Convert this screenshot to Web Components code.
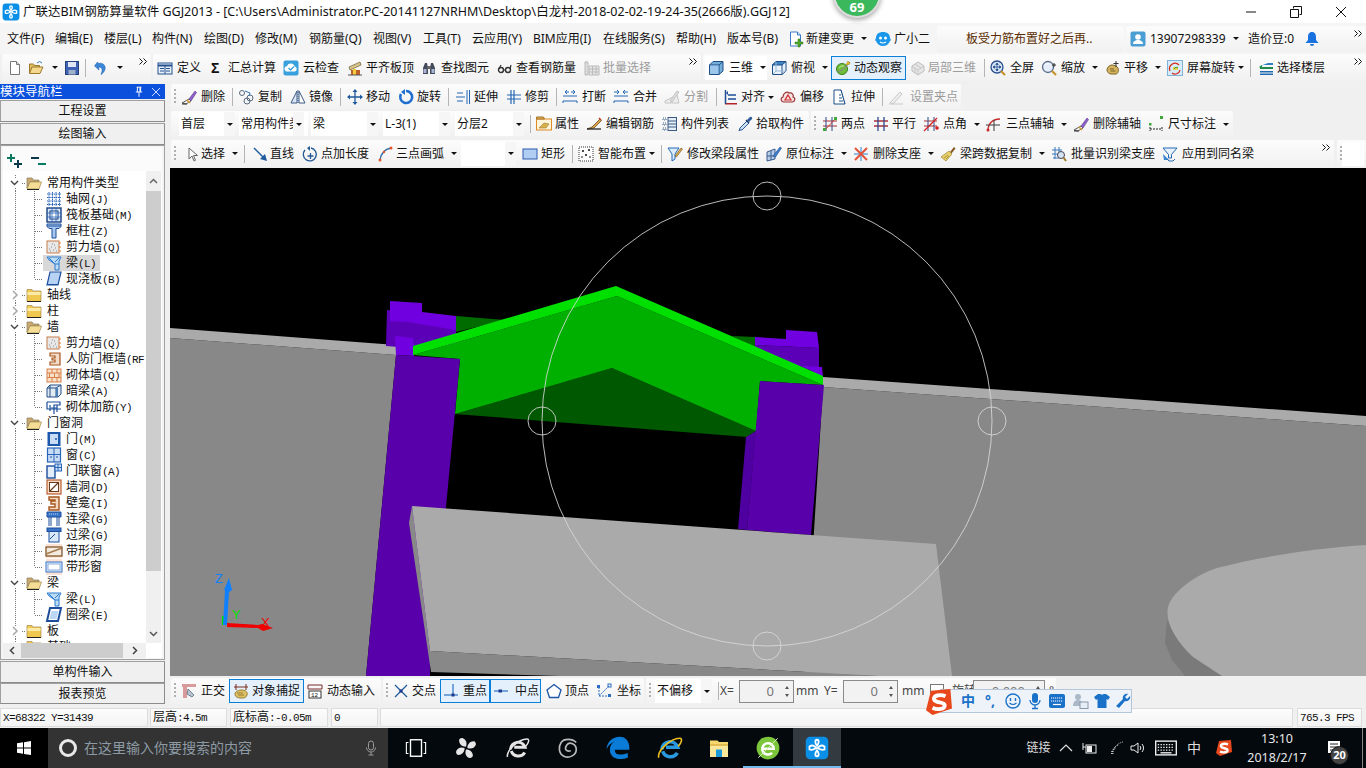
<!DOCTYPE html>
<html lang="zh">
<head>
<meta charset="utf-8">
<title>GGJ2013</title>
<style>
  html, body { margin: 0; padding: 0; background: #f0f0f0; }
</style>
</head>
<body>
<app-window>
  <title-bar></title-bar>

  <menu-bar>
    <menu-item w="48">文件(F)</menu-item><menu-item w="49">编辑(E)</menu-item><menu-item w="48">楼层(L)</menu-item>
    <menu-item w="52">构件(N)</menu-item><menu-item w="51">绘图(D)</menu-item><menu-item w="54">修改(M)</menu-item>
    <menu-item w="64">钢筋量(Q)</menu-item><menu-item w="50">视图(V)</menu-item><menu-item w="49">工具(T)</menu-item>
    <menu-item w="61">云应用(Y)</menu-item><menu-item w="70">BIM应用(I)</menu-item><menu-item w="73">在线服务(S)</menu-item>
    <menu-item w="51">帮助(H)</menu-item><menu-item w="61">版本号(B)</menu-item>
    <tool-btn i="newchg" t="18" w="87" caret>新建变更</tool-btn>
    <tool-btn i="xiaoer" t="19" w="62">广小二</tool-btn>
    <tool-seg w="187" p="29" h="26"><span style="color:#5a2c00">板受力筋布置好之后再..</span></tool-seg>
    <tool-gap w="2"></tool-gap>
    <tool-seg w="240" p="4" h="26">
      <tool-btn i="avatar" t="20" w="118" caret>13907298339</tool-btn>
      <tool-btn w="56" t="0">造价豆:0</tool-btn>
      <ui-icon name="bell"></ui-icon>
      <tool-more></tool-more>
    </tool-seg>
  </menu-bar>

  <tool-row h="30">
    <tool-gap w="2"></tool-gap>
    <tool-seg w="149" p="5" h="27">
      <tool-btn i="doc" t="21" w="21"></tool-btn>
      <tool-btn i="open" t="17" w="36" caret></tool-btn>
      <tool-btn i="save" t="21" w="21"></tool-btn>
      <tool-sep w="8"></tool-sep>
      <tool-btn i="undo" t="17" w="34" caret></tool-btn>
      <tool-more></tool-more>
    </tool-seg>
    <tool-gap w="2"></tool-gap>
    <tool-seg w="548" p="4" h="27">
      <tool-btn i="define" t="20" w="54">定义</tool-btn>
      <tool-btn i="sigma" t="17" w="72">汇总计算</tool-btn>
      <tool-btn i="cloudchk" t="20" w="64">云检查</tool-btn>
      <tool-btn i="flatten" t="19" w="74">平齐板顶</tool-btn>
      <tool-btn i="binoc" t="20" w="76">查找图元</tool-btn>
      <tool-btn i="glasses" t="19" w="87">查看钢筋量</tool-btn>
      <tool-btn i="batch" t="19" w="100" off>批量选择</tool-btn>
      <tool-more></tool-more>
    </tool-seg>
    <tool-gap w="2"></tool-gap>
    <tool-seg w="663" p="2" h="27">
      <tool-btn i="cube" t="21" w="62" p="3" box caret>三维</tool-btn>
      <tool-gap w="4"></tool-gap>
      <tool-btn i="cubetop" t="20" w="60" caret>俯视</tool-btn>
      <tool-btn i="orbit" t="19" w="75" p="4" on>动态观察</tool-btn>
      <tool-gap w="4"></tool-gap>
      <tool-btn i="local3d" t="18" w="74" off>局部三维</tool-btn>
      <tool-sep w="6"></tool-sep>
      <tool-btn i="zoomall" t="20" w="51">全屏</tool-btn>
      <tool-btn i="zoom" t="20" w="64" caret>缩放</tool-btn>
      <tool-btn i="pan" t="19" w="62" caret>平移</tool-btn>
      <tool-btn i="rotscr" t="20" w="83" caret tight>屏幕旋转</tool-btn>
      <tool-sep w="8"></tool-sep>
      <tool-btn i="floors" t="19" w="92">选择楼层</tool-btn>
      <tool-more></tool-more>
    </tool-seg>
  </tool-row>

  <main-area>
    <nav-panel>
      <tree-row k="open" ic="folderopen" t="常用构件类型"></tree-row>
      <tree-row k="leaf" ic="grid" t="轴网(J)"></tree-row>
      <tree-row k="leaf" ic="raft" t="筏板基础(M)"></tree-row>
      <tree-row k="leaf" ic="column" t="框柱(Z)"></tree-row>
      <tree-row k="leaf" ic="shear" t="剪力墙(Q)"></tree-row>
      <tree-row k="leaf" ic="beam" t="梁(L)" sel></tree-row>
      <tree-row k="leaf" ic="slab" t="现浇板(B)" last></tree-row>
      <tree-row k="shut" ic="folder" t="轴线"></tree-row>
      <tree-row k="shut" ic="folder" t="柱"></tree-row>
      <tree-row k="open" ic="folderopen" t="墙"></tree-row>
      <tree-row k="leaf" ic="shear" t="剪力墙(Q)"></tree-row>
      <tree-row k="leaf" ic="rfwall" t="人防门框墙(RF"></tree-row>
      <tree-row k="leaf" ic="brick" t="砌体墙(Q)"></tree-row>
      <tree-row k="leaf" ic="hidbeam" t="暗梁(A)"></tree-row>
      <tree-row k="leaf" ic="rebar" t="砌体加筋(Y)" last></tree-row>
      <tree-row k="open" ic="folderopen" t="门窗洞"></tree-row>
      <tree-row k="leaf" ic="door" t="门(M)"></tree-row>
      <tree-row k="leaf" ic="window" t="窗(C)"></tree-row>
      <tree-row k="leaf" ic="doorwin" t="门联窗(A)"></tree-row>
      <tree-row k="leaf" ic="hole" t="墙洞(D)"></tree-row>
      <tree-row k="leaf" ic="niche" t="壁龛(I)"></tree-row>
      <tree-row k="leaf" ic="linkbeam" t="连梁(G)"></tree-row>
      <tree-row k="leaf" ic="lintel" t="过梁(G)"></tree-row>
      <tree-row k="leaf" ic="bandhole" t="带形洞"></tree-row>
      <tree-row k="leaf" ic="bandwin" t="带形窗" last></tree-row>
      <tree-row k="open" ic="folderopen" t="梁"></tree-row>
      <tree-row k="leaf" ic="beam" t="梁(L)"></tree-row>
      <tree-row k="leaf" ic="ringbeam" t="圈梁(E)" last></tree-row>
      <tree-row k="shut" ic="folder" t="板"></tree-row>
      <tree-row k="shut" ic="folder" t="基础"></tree-row>
    </nav-panel>

    <work-area>
      <tool-row h="27">
        <tool-seg w="790" p="0" h="26">
          <tool-grip w="10"></tool-grip>
          <tool-btn i="eraser" t="20" w="51">删除</tool-btn>
          <tool-sep w="6"></tool-sep>
          <tool-btn i="copy" t="20" w="52">复制</tool-btn>
          <tool-btn i="mirror" t="19" w="50">镜像</tool-btn>
          <tool-sep w="7"></tool-sep>
          <tool-btn i="move" t="19" w="51">移动</tool-btn>
          <tool-btn i="rotate" t="19" w="50">旋转</tool-btn>
          <tool-sep w="7"></tool-sep>
          <tool-btn i="extend" t="19" w="51">延伸</tool-btn>
          <tool-btn i="trim" t="19" w="50">修剪</tool-btn>
          <tool-sep w="6"></tool-sep>
          <tool-btn i="break" t="20" w="51">打断</tool-btn>
          <tool-btn i="merge" t="20" w="51">合并</tool-btn>
          <tool-btn i="split" t="20" w="52" off>分割</tool-btn>
          <tool-sep w="7"></tool-sep>
          <tool-btn i="align" t="18" w="57" caret tight>对齐</tool-btn>
          <tool-btn i="offset" t="20" w="52">偏移</tool-btn>
          <tool-btn i="stretch" t="19" w="50">拉伸</tool-btn>
          <tool-sep w="6"></tool-sep>
          <tool-btn i="setgrip" t="22" w="73" off>设置夹点</tool-btn>
        </tool-seg>
      </tool-row>
      <tool-row h="29">
        <tool-seg w="638" p="8" h="26">
          <tool-combo w="56">首层</tool-combo><tool-gap w="4"></tool-gap>
          <tool-combo w="69" clip="52">常用构件类型</tool-combo><tool-gap w="3"></tool-gap>
          <tool-combo w="67">梁</tool-combo><tool-gap w="5"></tool-gap>
          <tool-combo w="67">L-3(1)</tool-combo><tool-gap w="5"></tool-gap>
          <tool-combo w="69">分层2</tool-combo><tool-gap w="6"></tool-gap>
          <tool-sep w="6"></tool-sep>
          <tool-btn i="props" t="19" w="50">属性</tool-btn>
          <tool-btn i="editbar" t="20" w="76">编辑钢筋</tool-btn>
          <tool-btn i="list" t="19" w="76">构件列表</tool-btn>
          <tool-btn i="dropper" t="18" w="71">拾取构件</tool-btn>
        </tool-seg>
        <tool-gap w="2"></tool-gap>
        <tool-seg w="422" p="0" h="26">
          <tool-grip w="11"></tool-grip>
          <tool-btn i="twopt" t="19" w="51">两点</tool-btn>
          <tool-btn i="parallel" t="19" w="50">平行</tool-btn>
          <tool-btn i="angle" t="20" w="62" caret>点角</tool-btn>
          <tool-btn i="arcaxis" t="21" w="88" caret>三点辅轴</tool-btn>
          <tool-btn i="eraser" t="20" w="75">删除辅轴</tool-btn>
          <tool-btn i="dim" t="20" w="85" caret>尺寸标注</tool-btn>
        </tool-seg>
      </tool-row>
      <tool-row h="28">
        <tool-seg w="1163" p="0" h="27">
          <tool-grip w="13"></tool-grip>
          <tool-btn i="cursor" t="17" w="60" caret>选择</tool-btn>
          <tool-sep w="8"></tool-sep>
          <tool-btn i="line" t="18" w="50">直线</tool-btn>
          <tool-btn i="ptlen" t="19" w="76">点加长度</tool-btn>
          <tool-btn i="arc" t="18" w="83" caret>三点画弧</tool-btn>
          <tool-combo w="55"></tool-combo><tool-gap w="6"></tool-gap>
          <tool-btn i="rect" t="19" w="50">矩形</tool-btn>
          <tool-sep w="6"></tool-sep>
          <tool-btn i="smart" t="20" w="83" caret tight>智能布置</tool-btn>
          <tool-sep w="6"></tool-sep>
          <tool-btn i="funnelpen" t="20" w="99">修改梁段属性</tool-btn>
          <tool-btn i="markup" t="20" w="87" caret>原位标注</tool-btn>
          <tool-btn i="delsup" t="20" w="87" caret>删除支座</tool-btn>
          <tool-btn i="broom" t="20" w="111" caret>梁跨数据复制</tool-btn>
          <tool-btn i="recog" t="20" w="111">批量识别梁支座</tool-btn>
          <tool-btn i="funnel" t="20" w="96">应用到同名梁</tool-btn>
          <tool-more></tool-more>
        </tool-seg>
        <tool-gap w="3"></tool-gap>
        <tool-seg w="29" p="0" h="27">
          <tool-grip w="5"></tool-grip>
          <tool-combo w="22" plain></tool-combo>
        </tool-seg>
      </tool-row>
      <scene-view></scene-view>
      <tool-row h="30" mid>
        <tool-gap w="1"></tool-gap>
        <tool-seg w="210" p="0" h="26">
          <tool-grip w="10"></tool-grip>
          <tool-btn i="ortho" t="20" w="48">正交</tool-btn>
          <tool-btn i="snap" t="19" w="75" p="4" on>对象捕捉</tool-btn>
          <tool-gap w="3"></tool-gap>
          <tool-btn i="dyn" t="20" w="74">动态输入</tool-btn>
        </tool-seg>
        <tool-gap w="2"></tool-gap>
        <tool-seg w="261" p="0" h="26">
          <tool-grip w="10"></tool-grip>
          <tool-btn i="xpt" t="19" w="47">交点</tool-btn>
          <tool-btn i="perp" t="20" w="50" p="3" on>重点</tool-btn>
          <tool-btn i="midpt" t="22" w="51" p="3" on>中点</tool-btn>
          <tool-gap w="5"></tool-gap>
          <tool-btn i="vertex" t="19" w="50">顶点</tool-btn>
          <tool-btn i="coord" t="21" w="48">坐标</tool-btn>
        </tool-seg>
        <tool-gap w="2"></tool-gap>
        <tool-seg w="410" p="0" h="26">
          <tool-grip w="9"></tool-grip>
          <tool-combo w="57">不偏移</tool-combo><tool-gap w="6"></tool-gap>
          <tool-sep w="2"></tool-sep>
          <tool-btn w="19" t="0" dim>X=</tool-btn>
          <num-input w="55" v="0"></num-input>
          <tool-gap w="2"></tool-gap>
          <tool-btn w="28" t="0" dim>mm</tool-btn>
          <tool-btn w="19" t="0" dim>Y=</tool-btn>
          <num-input w="55" v="0"></num-input>
          <tool-gap w="4"></tool-gap>
          <tool-btn w="28" t="0" dim>mm</tool-btn>
          <tool-btn w="22" t="0"><span style="display:block;width:12px;height:12px;border:1px solid #777;background:#fff"></span></tool-btn>
          <tool-btn w="21" t="0" dim>旋转</tool-btn>
          <num-input w="72" v="0.000"></num-input>
          <tool-gap w="4"></tool-gap>
          <tool-btn w="8" t="0" dim>°</tool-btn>
        </tool-seg>
      </tool-row>
    </work-area>
  </main-area>

  <status-bar>
    <stat-cell w="148" t="X=68322 Y=31439"></stat-cell><tool-gap w="2"></tool-gap>
    <stat-cell w="77" t="层高:4.5m"></stat-cell><tool-gap w="3"></tool-gap>
    <stat-cell w="98" t="底标高:-0.05m"></stat-cell><tool-gap w="3"></tool-gap>
    <stat-cell w="47" t="0"></stat-cell><tool-gap w="2"></tool-gap>
    <stat-cell w="913" t=""></stat-cell><tool-gap w="4"></tool-gap>
    <stat-cell w="65" t="765.3 FPS"></stat-cell>
  </status-bar>

  <task-bar>
    <task-item w="48" ic="win"></task-item>
    <task-search>在这里输入你要搜索的内容</task-search>
    <task-gap w="3"></task-gap>
    <task-item w="50" ic="taskview" s="22"></task-item>
    <task-item w="50" ic="fan" s="22"></task-item>
    <task-item w="54" ic="ieo" s="24"></task-item>
    <task-item w="46" ic="spiral" s="22"></task-item>
    <task-item w="54" ic="edge" s="26"></task-item>
    <task-item w="50" ic="iecolor" s="26"></task-item>
    <task-item w="48" ic="folderbar" s="24"></task-item>
    <task-item w="50" ic="greene" s="26" run></task-item>
    <task-item w="48" ic="app" s="24" run cur></task-item>
    <task-tray></task-tray>
  </task-bar>

  <score-bubble>69</score-bubble>
  <ime-bar></ime-bar>
</app-window>

<script>
const ICONS = {
  doc: `<path d="M3.5 1.5h6l3 3v10h-9z" fill="#fff" stroke="#777"/><path d="M9.5 1.5v3h3" fill="#ddd" stroke="#777"/>`,
  open: `<path d="M1.5 13V4h4l1 1.5h5V7" fill="#e2bd62" stroke="#9a7a2a"/><path d="M1.5 13.5 4 7h11l-3 6.5z" fill="#f4d88e" stroke="#9a7a2a"/><path d="M9 3q3-3 5 0" fill="none" stroke="#3a7ac8"/>`,
  save: `<rect x="1.5" y="1.5" width="13" height="13" fill="#3f63b4" stroke="#23407e"/><rect x="4" y="2" width="8" height="5" fill="#dfe7f5"/><rect x="4.5" y="10" width="7" height="4.5" fill="#9fb0c8"/>`,
  undo: `<path d="M5 3.5C11 2 14 7 11 11.5 10 13 9 14 8 14.5 10 10 9.5 7 5.5 7L6 10 1.5 6l3-4z" fill="#3a86d8" stroke="#2465ae" stroke-width=".6"/>`,
  define: `<rect x="1" y="3" width="14" height="11" fill="#e8f0fa" stroke="#23508e"/><path d="M1 5.5h14" stroke="#23508e" stroke-width="2"/><path d="M3 8.5h4M3 11h4M9 8.5h4M9 11h4M8 6v8" stroke="#23508e"/>`,
  sigma: `<text x="0" y="13" font-family="Liberation Sans,sans-serif" font-size="14" font-weight="bold" fill="#111">Σ</text>`,
  cloudchk: `<rect x=".5" y=".5" width="15" height="15" rx="2" fill="#38a0dc"/><path d="M3 11.5a3 3 0 0 1 1-5.6 4 4 0 0 1 7.6.6 2.6 2.6 0 0 1 .4 5z" fill="#fff"/><path d="M5.5 8l2 2 3.5-3.5" fill="none" stroke="#38a0dc" stroke-width="1.3"/>`,
  flatten: `<path d="M2 7 13 2l1 3L3 10z" fill="#d8c58c" stroke="#6a5a30" stroke-width=".7"/><rect x="4" y="10" width="9" height="5" fill="#c0602a"/><rect x="6" y="9" width="3" height="6" fill="#f2cf3c"/><path d="M1 15h14" stroke="#555"/>`,
  binoc: `<path d="M2 14V8l2-5h2l1 5v6zM9 14V8l1-5h2l2 5v6z" fill="#444a5c"/><rect x="2.5" y="9" width="3" height="4" fill="#a8b6d4"/><rect x="10.5" y="9" width="3" height="4" fill="#a8b6d4"/><rect x="6" y="6" width="4" height="3" fill="#666"/>`,
  glasses: `<circle cx="4" cy="10" r="2.5" fill="none" stroke="#333" stroke-width="1.4"/><circle cx="11" cy="10" r="2.5" fill="none" stroke="#333" stroke-width="1.4"/><path d="M6.5 10h2M2 9l2-4M13 9l1-4" stroke="#333" stroke-width="1.2"/>`,
  batch: `<path d="M1 2h3v13H1zM5 6h10v9H5z" fill="#e6e6e6" stroke="#bbb"/><path d="M5 9h10M5 12h10M8.5 6v9M12 6v9" stroke="#bbb"/><path d="M2 1v14" stroke="#bbb" stroke-dasharray="1 1"/>`,
  cube: `<path d="M1.5 5 5 1.5h10V11l-4 3.5H1.5z" fill="#76aedb" stroke="#1d4f86"/><path d="M1.5 5H11v9.5M11 5l4-3.5" fill="none" stroke="#1d4f86"/><path d="M2 5.5h8.500v8.500H2z" fill="#9cc7ea"/>`,
  cubetop: `<path d="M1.500 5 5 1.500h10V11l-4 3.500H1.500z" fill="#eaf3fb" stroke="#1d4f86"/><path d="M5 1.500h10L11 5H1.500z" fill="#3f83c4" stroke="#1d4f86"/><path d="M11 5v9.500" stroke="#1d4f86"/><path d="M1.500 14.500 5 11h10M5 2v9" stroke="#9cbad8" fill="none"/>`,
  orbit: `<circle cx="7" cy="9" r="5.500" fill="#6fbf3c" stroke="#3b7d1c"/><path d="M3 12C6 11 11 7 15 2" stroke="#888" stroke-width="1.200" fill="none"/><path d="M11 5l2-4 2 3z" fill="#f1c21e" stroke="#a07f10" stroke-width=".5"/><path d="M4 8q2-3 5-2" stroke="#c5eb9a" fill="none"/>`,
  local3d: `<path d="M2 6l6-4 6 4v5l-6 4-6-4z" fill="#e6e6e6" stroke="#bdbdbd"/><path d="M2 6l6 4 6-4M8 10v5M5 4l6 4M5 13V8" stroke="#c6c6c6" fill="none"/>`,
  zoomall: `<circle cx="7" cy="7" r="6" fill="#d6e6f8" stroke="#29508c" stroke-width="1.300"/><path d="M7 3v8M3 7h8M7 3 5.800 4.500h2.400zM7 11l-1.200-1.500h2.400zM3 7l1.500-1.200v2.400zM11 7 9.500 5.800v2.400z" stroke="#29508c" fill="#29508c" stroke-width=".8"/><path d="M11 11l4 4" stroke="#c8922a" stroke-width="2.200"/>`,
  zoom: `<circle cx="7" cy="7" r="5.500" fill="#e5eefa" stroke="#5a6c88" stroke-width="1.300"/><path d="M4 5q2-2 4-1" stroke="#fff" fill="none"/><path d="M11 11l4 4" stroke="#c8922a" stroke-width="2.200"/><path d="M13 3v4M11 5h4" stroke="#333"/>`,
  pan: `<path d="M2 10c0-3 3-5 5-5s5 1 6 3 0 6-2 6H6c-2 0-4-2-4-4z" fill="#d2b25e" stroke="#7e6426"/><path d="M5 9l4 0M5.500 11l5 0" stroke="#7e6426"/><path d="M11 1v6M8.500 3.500h5" stroke="#333"/>`,
  rotscr: `<rect x=".5" y=".5" width="15" height="15" fill="#d6ecf8" stroke="#7fb2d6"/><path d="M3 11a5.500 5.500 0 0 1 9-6" fill="none" stroke="#d62c1c" stroke-width="1.300"/><path d="M13 10a5 5 0 0 1-8 3" fill="none" stroke="#d62c1c" stroke-width="1.300"/><path d="M6 7h5v3H6z" fill="#e8d24a"/><path d="M7 9l2-2 2 1" stroke="#3a9a3a" fill="none"/>`,
  floors: `<path d="M2 6 10 3h5v2H6z" fill="#2f7fc0"/><path d="M2 7h13v2H2z" fill="#1f8a4a"/><path d="M2 11h13v1.500H2zM2 13.500h13V15H2z" fill="#1f6ab0"/><path d="M4 5 1 7l3 2" fill="#1f8a4a"/>`,
  newchg: `<path d="M2.500 1h7l3 3v11h-10z" fill="#fff" stroke="#3a7ac8"/><path d="M9.500 1v3h3" fill="#cfe1f5" stroke="#3a7ac8"/><path d="M10 8v3H7v2h3v3h2v-3h3v-2h-3V8z" fill="#52a82a" stroke="#2f7a12" stroke-width=".5"/>`,
  xiaoer: `<path d="M1 7c0-4 3-6 7-6s7 2 7 6c1 1 1 3 0 3-1 3-4 5-7 5s-6-2-7-5c-1 0-1-2 0-3z" fill="#1a96ea"/><circle cx="5.500" cy="7" r="1.500" fill="#fff"/><circle cx="10.500" cy="7" r="1.500" fill="#fff"/><path d="M5 11q3 2 6 0" stroke="#fff" fill="none" stroke-width="1.200"/>`,
  avatar: `<rect x=".5" y=".5" width="15" height="15" rx="2" fill="#4b9ed4"/><circle cx="8" cy="6" r="2.800" fill="#fff"/><path d="M3 13c0-3 3-4 5-4s5 1 5 4z" fill="#fff"/>`,
  bell: `<path d="M8 1c3 0 4 2.500 4 5v3l2.500 3h-13L4 9V6c0-2.500 1-5 4-5z" fill="#1a72e0"/><path d="M6 13h4a2 2 0 0 1-4 0z" fill="#1a72e0"/>`,
  eraser: `<path d="M1 14 8 10l2 2-5 3z" fill="#f2f2f2" stroke="#333" stroke-width=".8"/><path d="M8 10l6-8 1.500 1.500-5.500 8.500z" fill="#8d5fc8" stroke="#5a3a8c" stroke-width=".6"/><path d="M6 11l3 3" stroke="#d8a02c" stroke-width="1.500"/><path d="M1 15h5" stroke="#333"/>`,
  copy: `<circle cx="4" cy="4" r="2.500" fill="none" stroke="#5a6a80"/><circle cx="9" cy="12" r="3" fill="none" stroke="#5a6a80"/><circle cx="12" cy="9" r="3" fill="none" stroke="#5a6a80"/><path d="M7 2l5 2-1 3" stroke="#2f74c0" fill="none"/>`,
  mirror: `<path d="M7 2 1 14h6z" fill="#dce8f5" stroke="#3a5a84"/><path d="M9 2l6 12H9z" fill="#fff" stroke="#3a5a84"/><path d="M8 1v14" stroke="#3a5a84" stroke-dasharray="1 1"/>`,
  move: `<path d="M8 1v14M1 8h14" stroke="#1f5a9c" stroke-width="1.300"/><path d="M8 0 5.500 3h5zM8 16l-2.500-3h5zM0 8l3-2.500v5zM16 8l-3-2.500v5z" fill="#1f5a9c"/>`,
  rotate: `<path d="M8 2a6 6 0 1 1-5 3" fill="none" stroke="#1f6fd0" stroke-width="2.600"/><path d="M7 0 3 3l4 3z" fill="#1f6fd0"/>`,
  extend: `<path d="M1 8h9M2 4h6M2 12h6" stroke="#2468b4" stroke-width="1.200"/><path d="M12 1v14M14.500 1v14" stroke="#2468b4"/>`,
  trim: `<path d="M1 6h14M1 10h14" stroke="#2468b4"/><path d="M5 1v14M8 1v14" stroke="#2468b4" stroke-width="1.200"/>`,
  break: `<path d="M1 7h14M1 12h14M1 12v2M15 12v2" stroke="#2468b4" fill="none"/><path d="M3 3 7 3M9 3h4M3 3l2-2M3 3l2 2M13 3l-2-2M13 3l-2 2" stroke="#2468b4" fill="none"/>`,
  merge: `<path d="M1 7h14M1 12h14M1 12v2M15 12v2" stroke="#2468b4" fill="none"/><path d="M1 3h5M15 3h-5M6 3 4 1M6 3 4 5M10 3l2-2M10 3l2 2" stroke="#2468b4" fill="none"/>`,
  split: `<path d="M1 14h14L13 6 1 12z" fill="#eee" stroke="#c4c4c4"/><path d="M6 12 13 2l2 1-7 10z" fill="#ddd" stroke="#c4c4c4"/>`,
  align: `<path d="M2 14h12v1.500H2z" fill="#b2232a"/><path d="M2.500 1v14" stroke="#1d4f96" stroke-width="1.500"/><path d="M5 6h8M5 10h8" stroke="#1d4f96" stroke-width="1.300"/><path d="M3 4l2-2v4z" fill="#1d4f96"/>`,
  offset: `<path d="M4 13C1 13 0 9 3 8 3 4 7 2 9 4 12 3 14 6 13 8 16 9 15 13 12 13z" fill="#f2e2e2" stroke="#9a3a3a" stroke-width="1.200"/><path d="M8 6 11 11H5z" fill="none" stroke="#d42a2a" stroke-width="1.200"/>`,
  stretch: `<path d="M2 1h7l4 14H2z" fill="#fff" stroke="#1d4f86"/><path d="M9 1l4 14" stroke="#1d4f86" stroke-dasharray="1 1"/><path d="M7 6h2M7 9h3M7 12h4" stroke="#1d4f86"/>`,
  setgrip: `<path d="M2 14 12 3l2 2L5 15z" fill="#eee" stroke="#c8c8c8"/><path d="M1 15h14" stroke="#ccc"/>`,
  props: `<rect x=".5" y="3" width="15" height="11" fill="#fff4dc" stroke="#e08a22"/><path d="M.5 1h7l1 2H.5z" fill="#e8b050" stroke="#a0742a"/><path d="M3 12 8 7l5 1-3 4z" fill="#d8b050" stroke="#9a7a2a" stroke-width=".6"/>`,
  editbar: `<path d="M1 13 6 11l8-8 1.500 1.500L8 12z" fill="#dca84a" stroke="#5a3a10" stroke-width=".7"/><path d="M1 13h14" stroke="#222" stroke-width="1.300"/><path d="M13 2l2 2" stroke="#c83a2a" stroke-width="1.500"/>`,
  list: `<rect x="6" y="1.500" width="8.500" height="13" fill="#e6eff9" stroke="#3a5a84"/><path d="M6 5h8M6 8h8M6 11h8" stroke="#3a5a84"/><path d="M1 2h3v2H1zM1 7h3v2H1zM1 12h3v2H1z" fill="none" stroke="#3a5a84" stroke-dasharray="1 1"/>`,
  dropper: `<path d="M2 14l-1 1 1-3 7-7 2 2-7 7z" fill="#cfe0f2" stroke="#2a5b9a"/><path d="M9 4 12 1c1-1 3 1 2 2l-3 3z" fill="#2a5b9a"/><path d="M8 4l3 3" stroke="#16365e" stroke-width="1.500"/>`,
  twopt: `<path d="M1 5h14M1 10h14" stroke="#a83030"/><path d="M4 1v14M10 1v14" stroke="#2c4a8c"/><path d="M2 15 14 2" stroke="#c83a2a"/><rect x="12" y="1" width="3" height="3" fill="#3ea83a"/><rect x="1" y="12" width="3" height="3" fill="#3ea83a"/>`,
  parallel: `<path d="M1 5h14M1 10h14" stroke="#a8323a" stroke-width="1.300"/><path d="M5 1v14M11 1v14" stroke="#2c4a8c" stroke-width="1.300"/>`,
  angle: `<path d="M1 5h13M1 10h13" stroke="#a83030"/><path d="M5 1v14M11 1v14" stroke="#2c4a8c"/><path d="M1 15 14 2" stroke="#d82020" stroke-width="1.300"/><circle cx="14" cy="12" r="1.800" fill="#d82020"/>`,
  arcaxis: `<path d="M3 15C3 7 8 3 15 3" fill="none" stroke="#c82a2a" stroke-width="1.300"/><path d="M1 9h14M9 4v11" stroke="#3a3a3a"/><circle cx="3" cy="14" r="1.500" fill="#c82a2a"/>`,
  dim: `<rect x="12" y="0" width="3" height="3" fill="#3ea83a"/><rect x="1" y="7" width="2.500" height="2.500" fill="#3ea83a"/><path d="M2 11v4M14 11v4M2 13h12" stroke="#222" stroke-dasharray="2 1"/>`,
  cursor: `<path d="M5 2v11l3-3 2 5 1.500-.7-2-4.800h4z" fill="#fff" stroke="#666"/>`,
  line: `<path d="M2 2 13 13" stroke="#1f5a9c" stroke-width="1.500"/><path d="M15 15 8 13l5-5z" fill="#1f5a9c"/>`,
  ptlen: `<path d="M3 4a6.500 6.500 0 1 0 6-2" fill="none" stroke="#235a96" stroke-width="1.400"/><path d="M8 0v5L5 2z" fill="#235a96"/><path d="M8.500 7v6M5.500 10h6" stroke="#235a96" stroke-width="1.300"/>`,
  arc: `<path d="M2 14C3 7 7 3 13 2" fill="none" stroke="#2e6aa8" stroke-width="1.300"/><circle cx="2" cy="14" r="1.500" fill="#e0562a"/><circle cx="13" cy="2" r="1.500" fill="#e0562a"/><circle cx="6" cy="6" r="1.200" fill="#e0562a"/>`,
  rect: `<rect x="1" y="3" width="14" height="10" fill="#b2cdf2" stroke="#2a5ab0"/>`,
  smart: `<rect x="1" y="1" width="14" height="14" fill="#fff" stroke="#333" stroke-dasharray="1 1"/><path d="M4 5h2M5 4v2M10 4h2M11 3v2M7 9h2M8 8v2M3 11h2M11 11h2" stroke="#222" stroke-width="1.200"/>`,
  funnelpen: `<path d="M1 2h11L8 8v5l-3 2V8z" fill="#dcecfa" stroke="#2468b4"/><path d="M8 10 14 2l1.500 1-6 8z" fill="#e0b050" stroke="#6a4a1a" stroke-width=".6"/>`,
  markup: `<path d="M1 6 9 3v10l-8 2z" fill="#b8cde8" stroke="#3a5a8c"/><path d="M1 10h8M5 5v9" stroke="#3a5a8c"/><path d="M7 10 14 1l1.500 1-6 9z" fill="#3b7dd0" stroke="#214e8c" stroke-width=".6"/>`,
  delsup: `<path d="M8 1v14M1 8h14" stroke="#6fa8dc" stroke-width="1.500"/><path d="M2 2 14 14M14 2 2 14" stroke="#e2533a" stroke-width="2"/>`,
  broom: `<path d="M10 6 14 1l1.500 1.500-4 5z" fill="#8a5a24"/><path d="M1 11 9 5l3 3-6 7z" fill="#e7cf6a" stroke="#8a7420" stroke-width=".6"/><path d="M4 12l4-3M6 13l3-3" stroke="#8a7420" stroke-width=".6"/>`,
  recog: `<path d="M1 4h10M1 8h6M2 12h6M4 1v12M8 1v6" stroke="#3a7abe"/><circle cx="10" cy="9" r="3.500" fill="#d5e4f2" stroke="#445"/><path d="M12.500 11.500 15 15" stroke="#a07a2a" stroke-width="2"/>`,
  funnel: `<path d="M1 2h14L9.500 8.500V12H6.500V8.500z" fill="#e8f2fb" stroke="#2468b4"/><path d="M1 8 7 14h-5z" fill="#3b86d0"/><path d="M5 13 7 15 11 15 13 13" stroke="#2468b4" fill="none"/>`,
  ortho: `<path d="M1 1h14v3H6v11H2V4H1z" fill="#d89a9a"/><path d="M7 6l6 6-2 2-5-3z" fill="#b8c4d2" stroke="#4a5a6c" stroke-width=".7"/>`,
  snap: `<path d="M3 1v6M13 1v6M1 4h14" stroke="#7a2a1a"/><path d="M2 11c0-3 4-4 7-4s6 2 5 5-3 3-6 3-6-1-6-4z" fill="#dcc06a" stroke="#9a7f2a"/><path d="M4 10h6M5 12h6" stroke="#9a7f2a"/>`,
  dyn: `<path d="M1 2h14M1 6h14M1 2v4M15 2v4" stroke="#7a2a2a" fill="none"/><rect x="2" y="8" width="12" height="7" fill="#fff" stroke="#333"/><text x="4" y="14" font-family="Liberation Mono,monospace" font-size="6" fill="#111">12</text>`,
  xpt: `<path d="M2 2 14 14M14 2 2 14" stroke="#1f5a9c" stroke-width="1.300"/><rect x="6.500" y="6.500" width="3" height="3" fill="#1f3a8c"/>`,
  perp: `<path d="M1 12h14" stroke="#3a7ac8" stroke-width="1.300"/><path d="M10 1v11" stroke="#3a7ac8" stroke-width="1.300"/><rect x="8.500" y="10.500" width="3" height="3" fill="#1f3a8c"/>`,
  midpt: `<path d="M1 8h14" stroke="#3a7ac8" stroke-width="1.300"/><rect x="5.500" y="6.500" width="3.500" height="3" fill="#1f3a8c"/>`,
  vertex: `<path d="M8 1.500 15 7l-2.500 7.500h-9L1 7z" fill="#fff" stroke="#1d56a8" stroke-width="1.300"/>`,
  coord: `<path d="M3 13 13 3M3 4v9h10" fill="none" stroke="#2a6cc0" stroke-dasharray="2 1"/><rect x="1" y="2" width="3" height="3" fill="#2a6cc0"/><rect x="12" y="11" width="3" height="3" fill="#2a6cc0"/><rect x="12" y="1" width="3" height="3" fill="none" stroke="#2a6cc0"/>`,
  folderopen: `<path d="M1 13V3h5l1.500 2H13v2H4z" fill="#c8a870" stroke="#8a7a5a" stroke-width=".7"/><path d="M1 14 4 7h11.500L13 14z" fill="#f6dd96" stroke="#a08a50" stroke-width=".7"/><path d="M1 14.500h12" stroke="#222"/>`,
  folder: `<path d="M1 4V2.500h5L7 4h8v10.500H1z" fill="#f0c850" stroke="#a08a50" stroke-width=".7"/><path d="M1.500 5h13v3h-13z" fill="#fbe9a8"/><path d="M1 14.500h14" stroke="#222"/>`,
  grid: `<path d="M1 3h14M1 6.500h14M1 10h14M1 13.500h14M3 1v14M6.500 1v14M10 1v14M13.500 1v14" stroke="#2862b8" stroke-dasharray="1.500 .7"/>`,
  raft: `<rect x="1" y="1" width="14" height="14" fill="#dbe8f8" stroke="#163f80" stroke-width="1.400"/><rect x="4" y="4" width="8" height="8" fill="#fff" stroke="#163f80"/><path d="M1 6h14M1 10h14M6 1v14M10 1v14" stroke="#2a64b8" stroke-width=".8"/>`,
  column: `<path d="M1 1h14v2.500l-2 2H10V15H6V5.500H3l-2-2z" fill="#a8c8f0" stroke="#1c4e9c"/><path d="M1 3h14" stroke="#1c4e9c"/>`,
  shear: `<rect x="1" y="2" width="12" height="12" fill="#e8e8e8" stroke="#c87a4a"/><path d="M3 10h1M5 8h1M7 11h1M9 9h1M4 12h1M8 6h1M10 12h1M6 5h1" stroke="#888"/><path d="M13 4h2M13 8h2M13 12h2" stroke="#e07a2a" stroke-width="1.200"/>`,
  beam: `<path d="M1 2h14L13 6v9H9V9L3 5z" fill="#bcdcf6" stroke="#2a7ad0"/><path d="M3 3 9 9M13 3 9 7" stroke="#2a7ad0"/><path d="M9 9h4" stroke="#2a7ad0"/>`,
  slab: `<path d="M4 1h11l-3 13H1z" fill="#b8d2f4" stroke="#1c4e9c" stroke-width="1.200"/><path d="M1 14h10l1-1H2z" fill="#1c4e9c"/>`,
  rfwall: `<path d="M4 2h10v12H4v-3h5V9H6V7h3V5H4z" fill="#f2dcc8" stroke="#a8541c" stroke-width="1.200"/>`,
  brick: `<rect x="1" y="2" width="14" height="13" fill="#f8dfc8" stroke="#d8804a"/><path d="M1 6h14M1 10.500h14M6 2v4M11 2v4M3.500 6v4.500M8.500 6v4.500M13 6v4.500M6 10.500V15M11 10.500V15" stroke="#d8804a"/>`,
  hidbeam: `<path d="M1 5l3-3h11v9l-3 3H1z" fill="#e2eaf4" stroke="#264f86"/><path d="M4 2v12M10 5l5-3M10 5H1M10 5v9" stroke="#264f86" fill="none"/><rect x="10" y="5" width="2" height="9" fill="#4a7eb8"/>`,
  rebar: `<path d="M1 3h13v3H8v9M1 3v7h14M4 6v6M11 6v7" fill="none" stroke="#1c4e9c" stroke-width="1.200"/><path d="M5 9h6" stroke="#1c4e9c"/>`,
  door: `<rect x="1.500" y="1" width="13" height="14" fill="#1c58ac"/><rect x="4" y="3" width="8" height="10" fill="#c8dcf6"/><circle cx="10" cy="8" r="1" fill="#1c58ac"/>`,
  window: `<rect x="1.500" y="1" width="13" height="14" fill="#c8dcf6" stroke="#2a64b8" stroke-width="1.200"/><path d="M8 1v14M1 7.500h14" stroke="#2a64b8"/><path d="M5 9v2M11 9v2" stroke="#1c4e9c"/>`,
  doorwin: `<rect x="1" y="3" width="8" height="12" fill="#e2eefc" stroke="#1c4e9c" stroke-width="1.400"/><rect x="9" y="1" width="6.500" height="7" fill="#c8dcf6" stroke="#2a64b8"/><path d="M12 1v7M9 4.500h6" stroke="#2a64b8"/>`,
  hole: `<rect x="1" y="1" width="14" height="14" fill="#f8dcc8" stroke="#b86030" stroke-width="1.200"/><rect x="3.500" y="3.500" width="9" height="9" fill="#fff" stroke="#6a3a1a"/><path d="M3.500 12.500l9-9" stroke="#6a3a1a" stroke-width="1.200"/>`,
  niche: `<path d="M3 2h10v13H3v-3h6V9H5V6h4V5H3z" fill="#f2d8c0" stroke="#a8541c" stroke-width="1.400"/>`,
  linkbeam: `<path d="M1 1h14v5H1z" fill="#3a74c8" stroke="#1c4e9c"/><path d="M3 6v9M5 6v9M11 6v9M13 6v9" stroke="#1c4e9c"/><path d="M3 3h10" stroke="#bcd6f2" stroke-dasharray="1 1"/>`,
  lintel: `<rect x="1" y="1" width="14" height="3.500" fill="#3a74c8" stroke="#1c4e9c"/><rect x="3" y="4.500" width="10" height="10.500" fill="#d8e8fa" stroke="#1c4e9c"/><path d="M4 12l5-5" stroke="#1c4e9c"/>`,
  bandhole: `<rect x="0" y="1" width="16" height="14" fill="#fbe2d4"/><rect x="0" y="4" width="16" height="9" fill="#f2ebe0" stroke="#7a4a1a" stroke-width="1.200"/><path d="M0 11 16 5" stroke="#a87a4a" stroke-width="1.400"/>`,
  bandwin: `<rect x="0" y="0" width="16" height="16" fill="#fbe2d4"/><rect x="0" y="3" width="16" height="10" fill="#dbe8f8" stroke="#3a74c8"/><rect x="2" y="5" width="12" height="6" fill="#fff" stroke="#8ab0e0"/>`,
  ringbeam: `<path d="M4 1h11l-3 13H1z" fill="#fff" stroke="#1c4e9c" stroke-width="2"/><path d="M5.500 4h7l-2 8h-7z" fill="#bcd6f6"/>`,
  plus: `<path d="M4 1v8M0 5h8" stroke="#0a7a60" stroke-width="2"/><path d="M11 7v8M7 11h8" stroke="#0a3a4a" stroke-width="2"/>`,
  minus: `<path d="M0 5h8" stroke="#0a3a4a" stroke-width="2"/><path d="M7 11h8" stroke="#0a7a60" stroke-width="2"/>`,
  pin: `<path d="M5 2h6M6 2v6M10 2v6M4 8h8M8 8v6" stroke="#fff" stroke-width="1.200" fill="none"/><path d="M9 2.500v5" stroke="#fff"/>`,
  cross: `<path d="M3 3l10 10M13 3 3 13" stroke="#fff"/>`,
  win: `<path d="M1 3.200 7 2.300v5.300H1zM8 2.200 15 1v6.600H8zM1 8.400h6v5.300l-6-.9zM8 8.400h7V15l-7-1.100z" fill="#fff"/>`,
  mic: `<rect x="5.500" y="1" width="5" height="9" rx="2.500" fill="none" stroke="#9a9a9a"/><path d="M3.500 7.500a4.500 4.500 0 0 0 9 0M8 12v3M5.500 15h5" fill="none" stroke="#9a9a9a"/>`,
  taskview: `<rect x="4" y="2" width="8" height="12" fill="none" stroke="#fff"/><path d="M2.500 4H1v8h1.500M13.500 4H15v8h-1.500" fill="none" stroke="#fff" stroke-width=".8"/>`,
  fan: `<path d="M8 7C5 7 3 5 3 2.500 3 1 5 .5 6 1c2 1 3 3 2 6zM9 8c0-3 2-5 4.500-5C15 3 15.500 5 15 6c-1 2-3 3-6 2zM8 9c3 0 5 2 5 4.500 0 1.500-2 2-3 1.500-2-1-3-3-2-6zM7 8c0 3-2 5-4.500 5C1 13 .5 11 1 10c1-2 3-3 6-2z" fill="#e6e6e6"/>`,
  ieo: `<path d="M3 9a5 5 0 0 1 9.700-1.500H5.500M12.500 11a5 5 0 0 1-9-1" fill="none" stroke="#e6e6e6" stroke-width="2"/><path d="M1 14C0 10 8 2 14 2c2 0 1 3-1 5" fill="none" stroke="#e6e6e6"/>`,
  spiral: `<path d="M14 4C11 1 5 1 3 4s-2 8 2 10 9-1 9-5-5-6-7-3 0 5 3 4" fill="none" stroke="#bbb" stroke-width="1.200"/>`,
  edge: `<path d="M1 9C1 4 5 1 9 1s6 3 6 7v1H6c0 3 3 4 8 2v3c-6 2-11 0-11-5 0-2 1-4 3-5C4 5 2 6 1 9z" fill="#0a7cd8"/>`,
  iecolor: `<path d="M3 9a5 5 0 0 1 9.700-1.500H5.500M12.500 11a5 5 0 0 1-9-1" fill="none" stroke="#2a9ae0" stroke-width="2.200"/><path d="M1 14C0 10 8 2 14 2c2 0 1 3-1 5" fill="none" stroke="#f0c020"/>`,
  folderbar: `<path d="M2 3h5l1 1h6v10H2z" fill="#f5d76e"/><path d="M2 6h12v8H2z" fill="#fbe79a"/><rect x="6" y="9" width="4" height="5" fill="#1e9ad8"/><path d="M2 6h12" stroke="#d8b040"/>`,
  greene: `<circle cx="8" cy="8" r="7" fill="#7cc63c"/><path d="M4.500 8.500h7a3.500 3.500 0 1 0-1 2.500" fill="none" stroke="#fff" stroke-width="1.500"/><path d="M2 14 14 2" stroke="#d8f0c0" stroke-width=".6"/>`,
  app: `<rect x=".5" y=".5" width="15" height="15" rx="3" fill="#0a8fe8"/><path d="M8 2.500c1.500 0 1.500 2 0 4-1.500-2-1.500-4 0-4zM8 9.500c1.500 2 1.500 4 0 4-1.500 0-1.500-2 0-4zM3 7c1.500-1 3-1 4.500 1C6 9 4.500 9.500 3 9zM13 7c-1.500-1-3-1-4.500 1 1.500 1 3 1.500 4.500 1z" fill="none" stroke="#fff" stroke-width="1.200"/>`,
  wifi: `<path d="M2 14a3 3 0 0 1 0-3M2 14a6 6 0 0 1 4-6M2 14a9 9 0 0 1 7-9M3 14a12 12 0 0 1 10-12" fill="none" stroke="#ddd" stroke-dasharray="1 1"/>`,
  vol: `<path d="M1 6h3l4-3v10l-4-3H1z" fill="none" stroke="#eee"/><path d="M10 6a3 3 0 0 1 0 4M12 4a6 6 0 0 1 0 8" fill="none" stroke="#eee"/>`,
  kbd: `<rect x=".5" y="3" width="15" height="10" fill="none" stroke="#eee"/><path d="M2 5.500h12M2 7.500h12M2 9.500h12" stroke="#eee" stroke-dasharray="1 1"/><path d="M4 11.500h8" stroke="#eee"/>`,
  plug: `<rect x="5" y="5" width="10" height="8" fill="none" stroke="#eee"/><rect x="6" y="6" width="5" height="6" fill="#eee"/><path d="M2 3v4h3M2 7v3" stroke="#eee"/>`,
  chevup: `<path d="M2 11l6-6 6 6" fill="none" stroke="#ddd" stroke-width="1.200"/>`,
  note: `<path d="M2 1h12v12H2z" fill="#fff"/><path d="M4 4h8M4 7h8M4 10h8" stroke="#222"/>`,
  sogou: `<path d="M3 1 15 0 16 12 4 16 0 13z" fill="#e8481c"/><path d="M12 4.500C9 3 4 4 5 6.500s6 1 6.500 3.500-4.500 3-7.500 1.500" fill="none" stroke="#fff" stroke-width="2.400"/>`,
  smile: `<circle cx="8" cy="8" r="7" fill="none" stroke="#1a72c8" stroke-width="1.400"/><path d="M5.500 5v3M10.500 5v3" stroke="#1a72c8" stroke-width="1.400"/><path d="M4.500 10q3.500 3 7 0" fill="none" stroke="#1a72c8" stroke-width="1.200"/>`,
  micblue: `<rect x="5" y="0" width="6" height="10" rx="3" fill="#1a72c8"/><path d="M3 7a5 5 0 0 0 10 0M8 12v3M5 15.500h6" fill="none" stroke="#1a72c8" stroke-width="1.300"/>`,
  kbdblue: `<rect x="0" y="1" width="16" height="14" rx="2" fill="#1a72c8"/><path d="M2 5h12M2 8h12" stroke="#fff" stroke-dasharray="1.200 .8"/><path d="M4 11.500h8" stroke="#fff" stroke-width="1.200"/>`,
  userg: `<circle cx="6" cy="4" r="3" fill="#aab8c8"/><path d="M1 13c0-4 2-6 5-6s5 2 5 6z" fill="#aab8c8"/><rect x="8" y="9" width="8" height="6.500" fill="#e8eef6" stroke="#8a98a8"/>`,
  shirt: `<path d="M4 1h2.500q1.500 1.500 3 0H12l4 3-2 3-1.500-1v9h-9V6L2 7 0 4z" fill="#1a72c8"/>`,
  wrench: `<path d="M15 3c1 3-2 6-5 5l-6 7-3-2 7-7c-1-3 2-6 5-5l-3 3 2 2z" fill="#1a72c8"/>`
};

// gemeinsame Basis: Shadow Root mit Styles und Markup
class BaseEl extends HTMLElement {
  paint(css, html) {
    if (!this.shadowRoot) this.attachShadow({ mode: "open" });
    this.shadowRoot.innerHTML = `<style>${css}</style>${html}`;
  }
  num(name, dflt) {
    const v = this.getAttribute(name);
    return v === null ? dflt : Number(v);
  }
}

// Latein in Monospace mit halber Breite, wie der Bitmap-Font im Original
const monoText = (s) => s.replace(/[\x20-\x7e]+/g, (m) => `<span class="m">${m}</span>`);
const MONO_CSS = `.m{font-family:"Liberation Mono",monospace;font-size:11px;letter-spacing:-.6px}`;

class UiIcon extends BaseEl {
  connectedCallback() {
    const s = this.num("size", 16);
    this.paint(`:host{display:inline-flex;flex:none;width:${s}px;height:${s}px}svg{display:block;overflow:visible}`,
      `<svg width="${s}" height="${s}" viewBox="0 0 16 16">${ICONS[this.getAttribute("name")] || ""}</svg>`);
  }
}

class AppWindow extends BaseEl {
  connectedCallback() {
    this.paint(`:host{display:flex;flex-direction:column;position:relative;width:1366px;height:768px;overflow:hidden;
      background:#f0f0f0;color:#111;font:12px/16px "Noto Sans","Noto Sans CJK SC",sans-serif}`, `<slot></slot>`);
  }
}

class TitleBar extends BaseEl {
  connectedCallback() {
    this.paint(`:host{display:flex;align-items:center;flex:none;height:23px;padding-right:3px;box-sizing:border-box;background:#fff;font-size:12.5px;white-space:nowrap}
      .ic{margin:0 3px 0 2px;display:flex}
      .t{flex:1;overflow:visible}
      .c{width:45px;display:flex;justify-content:center}`,
      `<span class="ic"><ui-icon name="app" size="18"></ui-icon></span>
       <span class="t">广联达BIM钢筋算量软件 GGJ2013 - [C:\\Users\\Administrator.PC-20141127NRHM\\Desktop\\白龙村-2018-02-02-19-24-35(2666版).GGJ12]</span>
       <span class="c"><svg width="12" height="12"><path d="M1 6h10" stroke="#111"/></svg></span>
       <span class="c"><svg width="12" height="12"><path d="M3.500 2.500v-2h8v8h-2M.5 3.500h8v8h-8z" fill="none" stroke="#111"/></svg></span>
       <span class="c"><svg width="12" height="12"><path d="M1 1l10 10M11 1 1 11" stroke="#111"/></svg></span>`);
  }
}

class MenuBar extends BaseEl {
  connectedCallback() {
    this.paint(`:host{display:flex;align-items:center;flex:none;height:31px;padding-left:7px;box-sizing:border-box;background:#f5f5f5}`, `<slot></slot>`);
  }
}

class MenuItem extends BaseEl {
  connectedCallback() {
    this.style.width = this.num("w", 48) + "px";
    this.paint(`:host{display:block;flex:none;white-space:nowrap}`, `<slot></slot>`);
  }
}

class ToolRow extends BaseEl {
  connectedCallback() {
    this.paint(`:host{display:flex;flex:none;height:${this.num("h", 27)}px;align-items:${this.hasAttribute("mid") ? "center" : "flex-start"}}`, `<slot></slot>`);
  }
}

class ToolSeg extends BaseEl {
  connectedCallback() {
    this.paint(`:host{display:flex;align-items:center;flex:none;box-sizing:border-box;width:${this.num("w", 100)}px;height:${this.num("h", 26)}px;
      padding-left:${this.num("p", 0)}px;background:linear-gradient(#fcfcfc,#f1f1f1);border-radius:2px}`, `<slot></slot>`);
  }
}

class ToolGap extends BaseEl {
  connectedCallback() {
    this.paint(`:host{display:block;flex:none;width:${this.num("w", 4)}px}`, ``);
  }
}

class ToolSep extends BaseEl {
  connectedCallback() {
    this.paint(`:host{display:block;flex:none;box-sizing:border-box;width:${this.num("w", 6)}px;height:18px;border-left:1px solid #b4b4b4}`, ``);
  }
}

class ToolGrip extends BaseEl {
  connectedCallback() {
    this.paint(`:host{display:block;flex:none;box-sizing:border-box;width:${this.num("w", 10)}px;height:16px;padding-left:3px}
      i{display:block;width:2px;height:100%;background:repeating-linear-gradient(#b0b0b0 0 2px,transparent 2px 4px)}`, `<i></i>`);
  }
}

class ToolMore extends BaseEl {
  connectedCallback() {
    this.paint(`:host{display:block;flex:none;margin-left:auto;margin-right:4px;align-self:flex-start;margin-top:4px}svg{display:block}`,
      `<svg width="8" height="7"><path d="M.5.5l3 3-3 3M4.500.5l3 3-3 3" fill="none" stroke="#111"/></svg>`);
  }
}

class ToolBtn extends BaseEl {
  connectedCallback() {
    const on = this.hasAttribute("on");
    const box = this.hasAttribute("box");
    const pad = this.num("p", 0);
    const t = this.num("t", 20);
    const i = this.getAttribute("i");
    this.paint(`:host{display:flex;align-items:center;flex:none;box-sizing:border-box;width:${this.num("w", 50)}px;height:24px;
        padding-left:${on ? pad - 1 : pad}px;white-space:nowrap;${on ? "background:#e4f0fb;border:1px solid #0a7fd8;" : ""}${box ? "background:#fff;" : ""}}
      :host([off]){color:#9c9c9c}
      :host([dim]){color:#444}
      .ic{display:flex;flex:none;width:${t}px}
      .caret{flex:none;width:0;height:0;margin-left:${this.hasAttribute("tight") ? 3 : 7}px;border:3px solid transparent;border-top:3px solid #111;border-bottom:0}`,
      `${t ? `<span class="ic">${i ? `<ui-icon name="${i}"></ui-icon>` : ""}</span>` : ""}<slot></slot>${this.hasAttribute("caret") ? `<span class="caret"></span>` : ""}`);
  }
}

class ToolCombo extends BaseEl {
  connectedCallback() {
    const clip = this.getAttribute("clip");
    this.paint(`:host{display:flex;align-items:center;flex:none;box-sizing:border-box;width:${this.num("w", 56)}px;height:24px;background:#fff;padding-left:2px}
      .t{flex:1;overflow:hidden;white-space:nowrap;line-height:20px;${clip ? `max-width:${clip}px;` : ""}}
      .b{flex:none;width:11px;height:100%;background:#f6f6f6;display:flex;align-items:center;justify-content:center}
      .b i{width:0;height:0;border:3px solid transparent;border-top:3px solid #111;border-bottom:0}`,
      `<span class="t"><slot></slot></span>${this.hasAttribute("plain") ? "" : `<span class="b"><i></i></span>`}`);
  }
}

class NumInput extends BaseEl {
  connectedCallback() {
    this.paint(`:host{display:flex;align-items:center;flex:none;box-sizing:border-box;width:${this.num("w", 55)}px;height:23px;
        border:1px solid #8a8a8a;background:#f2f2f2;color:#777}
      .v{flex:1;text-align:right;padding-right:6px;font-size:13px}
      .s{flex:none;width:13px;display:flex;flex-direction:column;gap:5px;align-items:center}
      .s i{width:0;height:0;border:2.500px solid transparent;border-bottom:3px solid #555;border-top:0}
      .s i+i{border-top:3px solid #555;border-bottom:0}`,
      `<span class="v">${this.getAttribute("v")}</span><span class="s"><i></i><i></i></span>`);
  }
}

class MainArea extends BaseEl {
  connectedCallback() {
    this.paint(`:host{display:flex;flex:none;height:622px}`, `<slot></slot>`);
  }
}

class WorkArea extends BaseEl {
  connectedCallback() {
    this.paint(`:host{display:flex;flex-direction:column;flex:none;width:1196px;box-sizing:border-box}
      ::slotted(tool-row:nth-child(-n+3)){padding-left:1px}`, `<slot></slot>`);
  }
}

class NavPanel extends BaseEl {
  connectedCallback() {
    this.paint(`:host{display:flex;flex-direction:column;flex:none;width:165px;margin-right:5px}
      .head{display:flex;align-items:center;height:15px;background:#0a50dc;color:#fff;font-size:12.5px;flex:none}
      .head span{flex:1;white-space:nowrap}
      .head ui-icon{margin-right:1px;transform:scale(.8)}
      .btn{flex:none;box-sizing:border-box;height:22px;margin-top:1px;text-align:center;background:#f0f0f0;line-height:20px;
        border:1px solid #a0a0a0;border-right-color:#8c8c8c;border-bottom-color:#8c8c8c}
      .panel{flex:none;height:515px;box-sizing:border-box;border:1px solid #a0a0a0;background:#f4f4f4;display:flex;flex-direction:column;padding:0 2px 2px}
      .tools{flex:none;height:24px;display:flex;gap:8px;padding:6px 0 0 4px;box-sizing:border-box;background:#fbfbfb;margin:1px 0 0}
      .box{flex:1;min-height:0;display:grid;grid-template-columns:143px 15px;grid-template-rows:472px 15px;background:#fff}
      .tree{overflow:hidden;padding-top:4px;box-sizing:border-box}
      .vs{display:flex;flex-direction:column;background:#f0f0f0;align-items:stretch}
      .arr{flex:none;display:flex;align-items:center;justify-content:center}
      .vt{flex:none;background:#cdcdcd;height:380px}
      .hs{display:flex;background:#f0f0f0;grid-column:1}
      .ht{flex:none;background:#cdcdcd;width:102px}
      .corner{background:#fff}`,
      `<div class="head"><span>模块导航栏</span><ui-icon name="pin"></ui-icon><ui-icon name="cross"></ui-icon></div>
       <div class="btn">工程设置</div>
       <div class="btn">绘图输入</div>
       <div class="panel">
         <div class="tools"><ui-icon name="plus"></ui-icon><ui-icon name="minus"></ui-icon></div>
         <div class="box">
           <div class="tree"><slot></slot></div>
           <div class="vs">
             <span class="arr" style="height:20px"><svg width="9" height="6"><path d="M1 5l3.500-3.500L8 5" fill="none" stroke="#666" stroke-width="1.500"/></svg></span>
             <span class="vt"></span>
             <span class="arr" style="height:72px;align-items:flex-end;padding-bottom:6px;box-sizing:border-box"><svg width="9" height="6"><path d="M1 1l3.500 3.500L8 1" fill="none" stroke="#555" stroke-width="1.500"/></svg></span>
           </div>
           <div class="hs">
             <span class="arr" style="width:18px"><svg width="6" height="9"><path d="M5 1 1.500 4.500 5 8" fill="none" stroke="#444" stroke-width="1.500"/></svg></span>
             <span class="ht"></span>
             <span class="arr" style="width:23px"><svg width="6" height="9"><path d="M1 1l3.500 3.500L1 8" fill="none" stroke="#444" stroke-width="1.500"/></svg></span>
           </div>
           <div class="corner"></div>
         </div>
       </div>
       <div class="btn">单构件输入</div>
       <div class="btn" style="margin-top:0;height:21px">报表预览</div>`);
  }
}

class TreeRow extends BaseEl {
  connectedCallback() {
    const k = this.getAttribute("k");
    const dot = `stroke="#777" stroke-dasharray="1 1"`;
    let guide;
    if (k === "leaf") {
      const end = this.hasAttribute("last") ? 8 : 16;
      guide = `<svg width="40" height="16"><path d="M12.500 0v16" ${dot}/><path d="M31.500 0v${end}M32 8.500h8" ${dot} fill="none"/></svg>`;
    } else {
      const chev = k === "open"
        ? `<path d="M8 6l3.500 3.500L15 6" fill="none" stroke="#444" stroke-width="1.400"/>`
        : `<path d="M10 4l4 4-4 4" fill="none" stroke="#aaa" stroke-width="1.600"/>`;
      guide = `<svg width="23" height="16"><path d="M12.500 0v3M12.500 13v3M19 8.500h4" ${dot}/>${chev}</svg>`;
    }
    const sel = this.hasAttribute("sel");
    const leaf = k === "leaf";
    this.paint(`:host{display:flex;align-items:center;height:16px;white-space:nowrap}
      svg{flex:none;display:block}
      .w{display:flex;align-items:center;height:16px;${leaf ? "padding-left:3px;" : ""}${sel ? "background:#d8d8d8;padding-right:4px;" : ""}}
      .l{margin-left:${leaf ? 4 : 5}px;line-height:16px}
      ${MONO_CSS}`,
      `${guide}<span class="w"><ui-icon name="${this.getAttribute("ic")}"></ui-icon><span class="l">${monoText(this.getAttribute("t"))}</span></span>`);
  }
}

class SceneView extends BaseEl {
  connectedCallback() {
    const A = "#aaaaaa", W = "#888888", P = "#5800aa", PL = "#7000e0", PM = "#5c00b8";
    this.paint(`:host{display:block;flex:none;width:1196px;height:508px;background:#000;overflow:hidden}svg{display:block}`,
    `<svg width="1196" height="508" viewBox="170 168 1196 508">
      <polygon fill="${W}" points="170,338 396,355 366,676 170,676"/>
      <polygon fill="${A}" points="170,328 396,345 396,355 170,338"/>
      <polygon fill="${W}" points="823,387 1366,426 1366,676 805,676"/>
      <polygon fill="${A}" points="823,377 1366,416 1366,426 823,387"/>

      <polygon fill="#7a7a7a" points="1167,620 1165,643 1172,660 1185,676 1225,676 1190,650"/>
      <path fill="${A}" d="M1366 545 C1320 548 1267 555 1217 568 C1195 575 1172 592 1168 607 C1165 622 1175 640 1193 657 L1222 676 L1366 676 Z"/>

      <polygon fill="${PM}" points="387,310 456,318 456,345 413,348 386,346"/>
      <polygon fill="${PL}" points="390,301 422,303 422,312 456,316 456,330 408,322 390,321"/>
      <polygon fill="${PL}" points="395,336 413,338 414,356 396,355"/>
      <polygon fill="#006c00" points="456,316 505,320 456,332"/>
      <polygon fill="#006c00" points="732,336 755,337 755,347"/>
      <polygon fill="${PM}" points="755,345 819,348 819,368 803,370 755,350"/>
      <polygon fill="${PL}" points="755,337 786,339 786,330 817,332 819,348 755,345"/>
      <polygon fill="${PL}" points="803,366 822,367 823,378"/>

      <polygon fill="#005800" points="455,414 612,368 756,431 747,437"/>
      <polygon fill="#00b000" points="413,355 617,296 823,385 760,381 756,431 612,368 455,414 460,359"/>
      <polygon fill="#00e000" points="413,346 616,286 823,376 823,385 617,296 413,355"/>

      <polygon fill="${P}" points="396,355 460,359 430,676 366,676"/>
      <polygon fill="#4e00a0" points="746,437 756,431 747,530 738,529"/>
      <polygon fill="${P}" points="760,381 824,385 811,535 747,530"/>
      <polygon fill="#000" points="430,660 880,676 430,676"/>
      <polygon fill="${W}" points="412,506 409,523 431,672 560,676 880,676 430,651"/>
      <polygon fill="${A}" points="412,506 936,544 952,676 880,676 430,651"/>

      <g fill="none" stroke="#d8d8d8" stroke-opacity=".85">
        <circle cx="767" cy="421" r="225"/>
        <circle cx="767" cy="196" r="14"/>
        <circle cx="767" cy="646" r="14"/>
        <circle cx="542" cy="421" r="14"/>
        <circle cx="992" cy="421" r="14"/>
      </g>

      <path d="M223 616v9" stroke="#00e000" stroke-width="2"/>
      <polygon fill="#1080ff" points="223,625 225,590 224,590 229,578 232,590 229,592 227,625"/>
      <polygon fill="#f00000" points="227,623 258,625 262,624 273,628 263,631 258,628 227,627"/>
      <g font-family="Liberation Sans,sans-serif" font-size="13">
        <text x="215" y="583" fill="#1080ff">Z</text>
        <text x="232" y="619" fill="#00e000">Y</text>
        <text x="261" y="627" fill="#f00000">X</text>
      </g>
    </svg>`);
  }
}

class StatusBar extends BaseEl {
  connectedCallback() {
    this.paint(`:host{display:flex;flex:none;height:22px;padding-top:2px;box-sizing:border-box;background:#f0f0f0}`, `<slot></slot>`);
  }
}

class StatCell extends BaseEl {
  connectedCallback() {
    this.paint(`:host{display:flex;align-items:center;flex:none;box-sizing:border-box;width:${this.num("w", 50)}px;height:19px;padding-left:2px;
      border:1px solid #dcdcdc;background:linear-gradient(#fdfdfd,#f3f3f3);white-space:nowrap}
      ${MONO_CSS}`, `<span>${monoText(this.getAttribute("t") || "")}</span>`);
  }
}

class TaskBar extends BaseEl {
  connectedCallback() {
    this.paint(`:host{display:flex;flex:none;height:40px;background:#03090d;color:#eee}`, `<slot></slot>`);
  }
}

class TaskSearch extends BaseEl {
  connectedCallback() {
    this.paint(`:host{display:flex;align-items:center;flex:none;box-sizing:border-box;width:340px;height:40px;background:#333;color:#8d9aa4;font-size:14px;padding-left:11px}
      .o{flex:none;width:12px;height:12px;border:3px solid #e8e8e8;border-radius:50%;margin-right:7px;box-sizing:content-box}
      .t{flex:1;white-space:nowrap}
      ui-icon{margin-right:9px}`,
      `<span class="o"></span><span class="t"><slot></slot></span><ui-icon name="mic"></ui-icon>`);
  }
}

class TaskGap extends BaseEl {
  connectedCallback() {
    this.paint(`:host{display:block;flex:none;width:${this.num("w", 3)}px}`, ``);
  }
}

class TaskItem extends BaseEl {
  connectedCallback() {
    const first = this.getAttribute("ic") === "win";
    this.paint(`:host{display:flex;align-items:center;justify-content:center;flex:none;box-sizing:border-box;width:${this.num("w", 50)}px;height:40px;
      ${first ? "background:#000;" : ""}${this.hasAttribute("cur") ? "background:#343b40;" : ""}
      ${this.hasAttribute("run") ? "border-bottom:2px solid #76b9ed;padding-top:2px;" : ""}}`,
      `<ui-icon name="${this.getAttribute("ic")}" size="${this.num("s", 16)}"></ui-icon>`);
  }
}

class TaskTray extends BaseEl {
  connectedCallback() {
    this.paint(`:host{display:flex;align-items:center;flex:1;color:#ddd;padding-left:185px;box-sizing:border-box;min-width:0}
      .i{display:flex;flex:none;justify-content:center;align-items:center}
      .clock{flex:none;width:76px;text-align:center;line-height:19px;font-size:12.500px;color:#e8e8e8;margin-left:7px}
      .note{flex:none;display:flex;margin-left:11px;position:relative}
      .badge{position:absolute;left:4px;top:6px;width:19px;height:19px;box-sizing:border-box;border-radius:50%;background:#444;border:1.500px solid #111;color:#fff;font-size:11px;line-height:16px;text-align:center;font-weight:bold}
      .bar{flex:none;width:1px;height:40px;background:#888;margin-left:20px}`,
      `<span class="i" style="width:25px">链接</span>
       <span class="i" style="width:30px"><ui-icon name="chevup"></ui-icon></span>
       <span class="i" style="width:16px"><ui-icon name="plug"></ui-icon></span>
       <span class="i" style="width:16px;margin-left:13px"><ui-icon name="wifi"></ui-icon></span>
       <span class="i" style="width:16px;margin-left:4px"><ui-icon name="vol"></ui-icon></span>
       <span class="i" style="width:24px;margin-left:8px"><ui-icon name="kbd" size="22"></ui-icon></span>
       <span class="i" style="width:14px;margin-left:9px;font-size:14px">中</span>
       <span class="i" style="width:17px;margin-left:14px"><ui-icon name="sogou"></ui-icon></span>
       <span class="clock">13:10<br>2018/2/17</span>
       <span class="note"><ui-icon name="note"></ui-icon><span class="badge">20</span></span>
       <span class="bar"></span>`);
  }
}

class ScoreBubble extends BaseEl {
  connectedCallback() {
    this.paint(`:host{position:absolute;left:833px;top:-30px;width:48px;height:48px;box-sizing:border-box;border-radius:50%;background:#3cb85c;
      border:2px solid #dcdcdc;box-shadow:0 2px 5px rgba(0,0,0,.35);color:#fff;font-weight:bold;font-size:13px;line-height:13px;display:flex;align-items:flex-end;justify-content:center;padding-bottom:2px}`, `<slot></slot>`);
  }
}

class ImeBar extends BaseEl {
  connectedCallback() {
    const it = (n, w) => `<span class="i" style="width:${w}px"><ui-icon name="${n}"></ui-icon></span>`;
    this.paint(`:host{position:absolute;left:940px;top:689px;width:192px;height:24px;box-sizing:border-box;background:#eef3fa;border:1px solid #b4c6dc;display:flex;align-items:center;padding-left:17px;color:#1a72c8}
      .s{position:absolute;left:-15px;top:-1px}
      .i{display:flex;flex:none;justify-content:center;align-items:center}
      b{font-size:14px}`,
      `<span class="s"><ui-icon name="sogou" size="26"></ui-icon></span>
       <span class="i" style="width:20px"><b>中</b></span><span class="i" style="width:24px"><b>°,</b></span>
       ${it("smile", 22)}${it("micblue", 22)}${it("kbdblue", 22)}${it("userg", 24)}${it("shirt", 20)}${it("wrench", 22)}`);
  }
}

// Reihenfolge egal, Elemente werden beim define hochgestuft
customElements.define("ui-icon", UiIcon);
customElements.define("app-window", AppWindow);
customElements.define("title-bar", TitleBar);
customElements.define("menu-bar", MenuBar);
customElements.define("menu-item", MenuItem);
customElements.define("tool-row", ToolRow);
customElements.define("tool-seg", ToolSeg);
customElements.define("tool-gap", ToolGap);
customElements.define("tool-sep", ToolSep);
customElements.define("tool-grip", ToolGrip);
customElements.define("tool-more", ToolMore);
customElements.define("tool-btn", ToolBtn);
customElements.define("tool-combo", ToolCombo);
customElements.define("num-input", NumInput);
customElements.define("main-area", MainArea);
customElements.define("work-area", WorkArea);
customElements.define("nav-panel", NavPanel);
customElements.define("tree-row", TreeRow);
customElements.define("scene-view", SceneView);
customElements.define("status-bar", StatusBar);
customElements.define("stat-cell", StatCell);
customElements.define("task-bar", TaskBar);
customElements.define("task-search", TaskSearch);
customElements.define("task-gap", TaskGap);
customElements.define("task-item", TaskItem);
customElements.define("task-tray", TaskTray);
customElements.define("score-bubble", ScoreBubble);
customElements.define("ime-bar", ImeBar);
</script>
</body>
</html>
